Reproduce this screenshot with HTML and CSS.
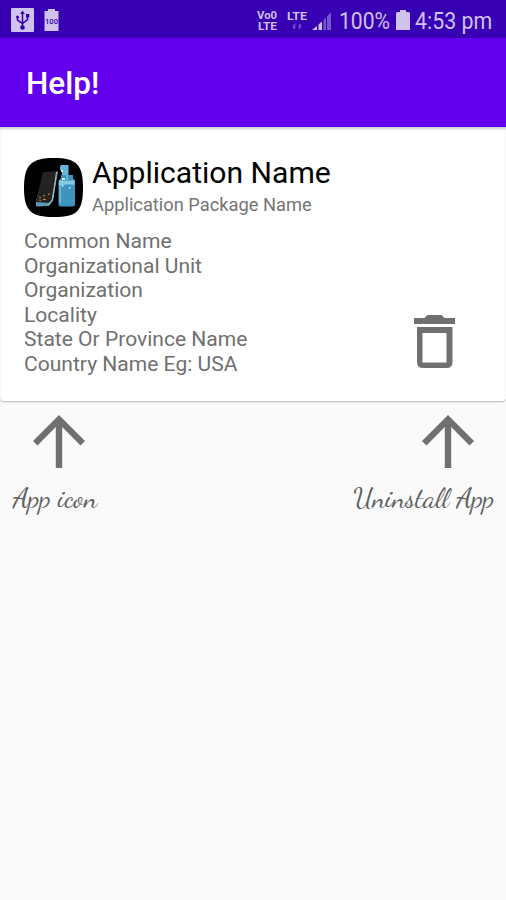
FILE: index.html
```html
<!DOCTYPE html>
<html lang="en">
<head>
<meta charset="utf-8">
<meta name="viewport" content="width=device-width">
<title>Help!</title>
<link rel="stylesheet" href="styles.css">
</head>
<body>
<div class="status">
  <svg class="usb" width="23" height="24" viewBox="0 0 23 24">
    <rect width="23" height="24" rx="1" fill="#cfc2ee"/>
    <path d="M11.5 5v14M6.5 9v3.2l5 3.3 5-3.800V8" fill="none" stroke="#3700b3" stroke-width="1.500"/>
    <path d="M11.500 2.500l2.300 3.500h-4.600z" fill="#3700b3"/>
    <circle cx="11.500" cy="19.500" r="2.300" fill="#3700b3"/><circle cx="6.500" cy="9" r="1.500" fill="#3700b3"/><rect x="15" y="6" width="3.300" height="3.500" fill="#3700b3"/>
  </svg>
  <svg class="full" width="15" height="22" viewBox="0 0 15 22">
    <path d="M4 0h7v2h3.500v20H.5V2H4z" fill="#cfc2ee"/>
    <text x="1" y="15" textLength="13" lengthAdjust="spacingAndGlyphs" class="cell">100</text>
  </svg>
  <svg class="radio" width="76" height="24" viewBox="0 0 76 24">
    <g class="net">
      <text x="0" y="10" textLength="20" lengthAdjust="spacingAndGlyphs">Vo0</text>
      <text x="1" y="21" textLength="19" lengthAdjust="spacingAndGlyphs">LTE</text>
      <text x="30" y="11" textLength="20" lengthAdjust="spacingAndGlyphs">LTE</text>
    </g>
    <path d="M37.500 15v4.500M36 17l1.500 3M42.500 20v-4.500M44 18l-1.500-3" stroke="#7450cb" stroke-width="1.500" fill="none"/>
    <path d="M55 21l5-4v4zM61.500 15.500l3.500-3V21h-3.500z" fill="#cfc2ee"/>
    <path d="M66.500 11l2.500-2.500V21h-2.500zM70 7.500L74 3v18h-4z" fill="#7857cc"/>
  </svg>
  <span class="pct">100%</span>
  <svg class="bat" width="14" height="20" viewBox="0 0 14 20"><path d="M4 0h6v2h2.500q1.500 0 1.500 1.500V20H0V3.500Q0 2 1.500 2H4z" fill="#cfc2ee"/></svg>
  <span class="time">4:53 pm</span>
</div>
<header class="bar"><h1>Help!</h1></header>
<main>
  <section class="card">
    <div class="head">
      <svg width="60" height="60" viewBox="0 0 60 60">
        <path d="M30 0C53 0 59 7 59 30S53 59 30 59 0 53 0 30 7 0 30 0z" fill="#000"/>
        <path d="M20 15l14-1.500-5 29-4 5.500-13 .5V43z" fill="#5e9ab4"/>
        <path d="M18.500 15.500q.5-1.500 2-1.500l11-.700q1.500 0 1.300 1.500L27.500 42l-3 3L12 44z" fill="#252322"/>
        <path d="M32.500 14L28.500 42l-4 4.500" fill="none" stroke="#a9c9d4" stroke-width="1"/>
        <path d="M15 39l2 .5m2-2l2 .5m3-1.500l2-.5M15 42l2 .3m2-1l3 .2" stroke="#c08036" stroke-width="1.200"/>
        <path d="M36 9l1-2h7.500v10H38v-5h-2z" fill="#67b5d7"/>
        <path d="M37 17h12v3l2 3v23q0 2.500-2.500 2.500h-12Q34.500 48.500 34.500 46V23l2.500-3z" fill="#3f94bd"/>
        <path d="M35 22q7.500 2 15.500 0v5q-7-2-15.500 1z" fill="#83cbe6"/>
        <path d="M36.200 28v17M43 17v7" stroke="#8bd0e8"/>
        <path d="M37 12h2v2h-2zM38 27h1.500v1.500H38zM45 29h1.500v1.500H45zM38 20h3v2h-3z" fill="#d1eef9"/>
      </svg>
      <div class="names"><div class="name">Application Name</div><div class="pkg">Application Package Name</div></div>
    </div>
    <div class="foot">
      <ul class="info">
        <li>Common Name</li><li>Organizational Unit</li><li>Organization</li><li>Locality</li><li>State Or Province Name</li><li>Country Name Eg: USA</li>
      </ul>
      <svg class="trash" width="41" height="54" viewBox="0 0 41 54">
        <path d="M0 3h10.500l3-3h14l3 3H41v6H0z" fill="#707070"/>
        <path d="M3 12h35.500v35q0 6-6 6H9q-6 0-6-6zM8.500 18v29.500h24V18z" fill="#707070" fill-rule="evenodd"/>
      </svg>
    </div>
  </section>
  <section class="hints">
    <figure class="hint left">
      <svg width="52" height="53" viewBox="0 0 52 53"><path d="M26 0l26 26-4.500 4.500L29.200 12V53h-6.400V12L4.500 30.500 0 26z" fill="#707070"/></svg>
      <figcaption>App icon</figcaption>
    </figure>
    <figure class="hint right">
      <svg width="52" height="53" viewBox="0 0 52 53"><path d="M26 0l26 26-4.500 4.500L29.200 12V53h-6.400V12L4.500 30.500 0 26z" fill="#707070"/></svg>
      <figcaption>Uninstall App</figcaption>
    </figure>
  </section>
</main>
</body>
</html>
```
FILE: styles.css
```css
* { box-sizing: border-box; }
body { margin: 0; height: 900px; overflow: hidden; background: #fafafa; font-family: Roboto, "Liberation Sans", sans-serif; }
svg { display: block; flex: none; }
.status { height: 38px; display: flex; align-items: flex-start; background: #3700b3; color: #cfc2ee; padding-left: 11px; white-space: nowrap; }
.usb { margin-top: 8px; }
.full { margin: 9px 0 0 10px; }
.cell { font-size: 8px; font-weight: 500; fill: #3700b3; }
.radio { margin: 9px 0 0 198px; }
.net { font-size: 10px; line-height: 10px; font-weight: 700; fill: #cfc2ee; }
.pct, .time { font-size: 24px; line-height: 42px; transform-origin: 0 50%; }
.pct { width: 50px; margin-left: 6px; transform: scaleX(.88); }
.bat { margin: 10px 0 0 7px; }
.time { margin-left: 5px; transform: scaleX(.89); }
.bar { height: 89px; display: flex; align-items: center; padding: 3px 0 0 26px; background: #6200ee; color: #fff; }
h1 { margin: 0; font-size: 31.500px; font-weight: 500; line-height: 40px; }
.card { height: 274px; background: #fff; border-radius: 0 0 4px 4px; padding: 31px 0 0 24px; box-shadow: 0 1px 2px #0004, inset 0 3px 3px -1px #0003; }
.head { display: flex; height: 71px; }
.names { margin-left: 8px; }
.name { font-size: 30.100px; line-height: 36px; color: #000; margin-top: -3px; white-space: nowrap; }
.pkg { font-size: 18.300px; line-height: 22px; color: #757575; margin-top: 3px; white-space: nowrap; }
.foot { display: flex; justify-content: space-between; padding-right: 51px; }
.info { margin: 0; padding: 0; list-style: none; color: #707070; font-size: 21.050px; line-height: 24.600px; }
.trash { margin-top: 86px; }
.hints { display: flex; justify-content: space-between; padding: 14px 12px 0 13px; }
.hint { margin: 0; }
.left > svg { margin-left: 20px; }
.right > svg { margin-left: auto; margin-right: 20px; }
figcaption { margin-top: 12px; font: 28.300px/36px "Dancing Script", cursive; color: #606060; white-space: nowrap; }
```
